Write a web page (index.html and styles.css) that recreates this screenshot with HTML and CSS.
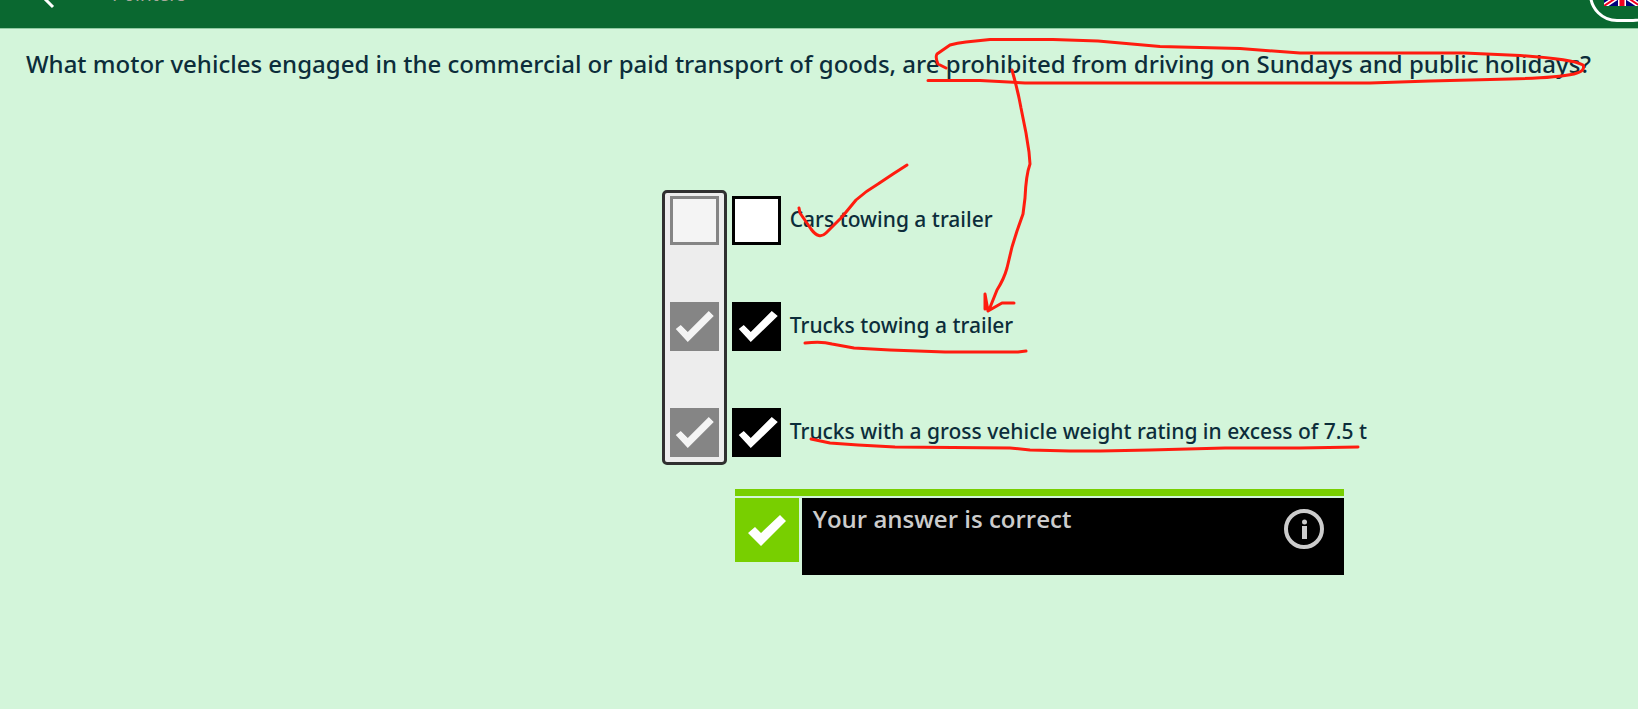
FILE: index.html
```html
<!DOCTYPE html>
<html lang="en">
<head>
<meta charset="utf-8">
<meta name="viewport" content="width=device-width, initial-scale=1">
<title>Theory question</title>
<link rel="stylesheet" href="styles.css">
</head>
<body>
<header class="topbar">
  <button class="back" aria-label="Back"><svg width="20" height="20" viewBox="0 0 20 20"><path d="M12 -13 2 -3 12 7" fill="none" stroke="#fff" stroke-width="3"/></svg></button>
  <span class="topbar-label">Pointers</span>
  <button class="language" aria-label="English">
    <svg width="36" height="24" viewBox="0 0 36 24"><path fill="#00007d" d="M0 0h36v24H0z"/><path d="m0 0 36 24M36 0 0 24" stroke="#fff" stroke-width="5"/><path d="m0 0 36 24M36 0 0 24" stroke="#f00020" stroke-width="2"/><path d="M18 0v24M0 12h36" stroke="#fff" stroke-width="8"/><path d="M18 0v24M0 12h36" stroke="#f00020" stroke-width="5"/></svg>
  </button>
</header>
<main>
  <h1 class="question">What motor vehicles engaged in the commercial or paid transport of goods, are prohibited from driving on Sundays and public holidays?</h1>
  <section class="answers">
    <div class="solution">
      <input class="box" type="checkbox" disabled aria-label="Solution 1">
      <input class="box" type="checkbox" disabled checked aria-label="Solution 2">
      <input class="box" type="checkbox" disabled checked aria-label="Solution 3">
    </div>
    <div class="options">
      <label class="option"><input class="box" type="checkbox"><span>Cars towing a trailer</span></label>
      <label class="option"><input class="box" type="checkbox" checked><span>Trucks towing a trailer</span></label>
      <label class="option"><input class="box" type="checkbox" checked><span>Trucks with a gross vehicle weight rating in excess of 7.5 t</span></label>
    </div>
    <div class="feedback">
      <div class="feedback-icon"><svg width="64" height="64" viewBox="0 0 64 64"><path fill="#fff" d="m45 17 6 6-25 25-13-13 7-6 6 6z"/></svg></div>
      <div class="feedback-body">
        <p>Your answer is correct</p>
        <button class="info" aria-label="Information"><svg width="40" height="40" viewBox="0 0 40 40"><circle cx="20" cy="20" r="18" fill="none" stroke="#ccc" stroke-width="4"/><path fill="#ccc" d="M18 17h5v13h-5z"/><circle cx="20.500" cy="13" r="2.500" fill="#ccc"/></svg></button>
      </div>
    </div>
  </section>
</main>
<svg class="ink" width="1638" height="709" viewBox="0 0 1638 709" aria-hidden="true">
  <path d="M946 68 938 64Q935 57 937 54L950 45Q957 43 966 42L990 39.500H1053L1098 41 1160 46.500 1240 48.500 1300 53H1464L1520 55.500Q1572 59 1583 65 1586 71 1574 74 1555 78 1510 79L1430 81 1370 83H1025L980 80.500H928"/>
  <path d="M1012 70Q1018 91 1021 108L1026 133 1029 152 1030 164Q1026 175 1025 198L1023 214 1017 231 1012 247 1007 268Q1004 279 997 290L989 310 988 311 985 294V309M988 311 1002 303H1014"/>
  <path d="m799 208 1 5 11 16Q819 240 826 233L842 217 856 200Q866 191 878 184L893 174 907 165"/>
  <path d="M805 343Q822 341 832 344L854 348 890 350 945 352H1018L1026 351"/>
  <path d="M811 439 830 443 858 445 895 447 1010 448 1030 450 1070 451H1100L1150 450 1225 448H1270L1300 448 1358 447"/>
</svg>
</body>
</html>
```
FILE: styles.css
```css
* { box-sizing: border-box; }

body {
  margin: 0;
  min-height: 100vh;
  background: #d3f5da;
  color: #0c2d3a;
  font-family: "Noto Sans", "Open Sans", sans-serif;
}

button { border: 0; padding: 0; background: none; }
svg { display: block; }

.topbar {
  display: flex;
  align-items: flex-start;
  height: 29px;
  overflow: hidden;
  background: #0a6830;
  border-bottom: 1px solid #8fcaa1;
}

.back { margin-left: 41px; }

.topbar-label {
  margin: -20px 0 0 51px;
  color: #a9a99c;
  font-size: 19px;
  line-height: 28px;
}

.language {
  width: 72px;
  height: 56px;
  margin: -34px -23px 0 auto;
  padding: 12px;
  border: 3px solid #fff;
  border-radius: 28px;
}

.question {
  margin: 0;
  padding: 17px 26px;
  font-size: 24px;
  font-weight: 500;
  line-height: 36px;
}

.answers {
  display: grid;
  grid-template-columns: max-content minmax(0, 1fr);
  column-gap: 5px;
  padding: 91px 24px 24px 40.4%;
}

.solution, .options {
  display: flex;
  flex-direction: column;
  gap: 57px;
}

.solution {
  padding: 3px 5px 5px;
  border: 3px solid #303030;
  border-radius: 5px;
  background: #ededed;
}

.options { padding-top: 6px; }

.option {
  display: flex;
  align-items: center;
  gap: 9px;
  font-size: 21px;
  font-weight: 500;
  line-height: 28px;
}

.option span { padding-bottom: 4px; }

.box {
  appearance: none;
  flex: none;
  width: 49px;
  height: 49px;
  margin: 0;
  border: 3px solid #000;
  background: #fff;
}

.box:checked { background: #000; }

.box:checked::before {
  content: "";
  display: block;
  width: 49px;
  height: 49px;
  margin: -3px;
  background: #fff;
  clip-path: polygon(40px 9px, 46px 14px, 19px 40px, 7px 27px, 12px 23px, 19px 30px);
}

.box:disabled { border-color: #858585; background: #f4f4f4; }
.box:disabled:checked { background: #858585; }
.box:disabled:checked::before {
  background: #f4f4f4;
  clip-path: polygon(39px 9px, 44px 14px, 18px 40px, 6px 27px, 11px 23px, 18px 30px);
}

.feedback {
  grid-column: 2;
  display: grid;
  grid-template-columns: 64px 1fr;
  align-items: start;
  gap: 2px 3px;
  max-width: 609px;
  margin: 24px 0 0 3px;
}

.feedback::before {
  content: "";
  grid-column: 1 / -1;
  height: 7px;
  background: #78cf00;
}

.feedback-icon { background: #78cf00; }

.feedback-body {
  display: flex;
  align-items: flex-start;
  justify-content: space-between;
  min-height: 77px;
  padding: 4px 20px 4px 11px;
  background: #000;
  color: #ccc;
  font-family: "Open Sans", "Noto Sans", sans-serif;
  font-size: 24px;
  font-weight: 600;
  line-height: 34px;
}

.feedback-body p { margin: 0; }
.info { margin-top: 7px; }

.ink {
  position: absolute;
  top: 0;
  left: 0;
  pointer-events: none;
  fill: none;
  stroke: #ff1c0f;
  stroke-width: 3px;
  stroke-linecap: round;
  stroke-linejoin: round;
}
```
